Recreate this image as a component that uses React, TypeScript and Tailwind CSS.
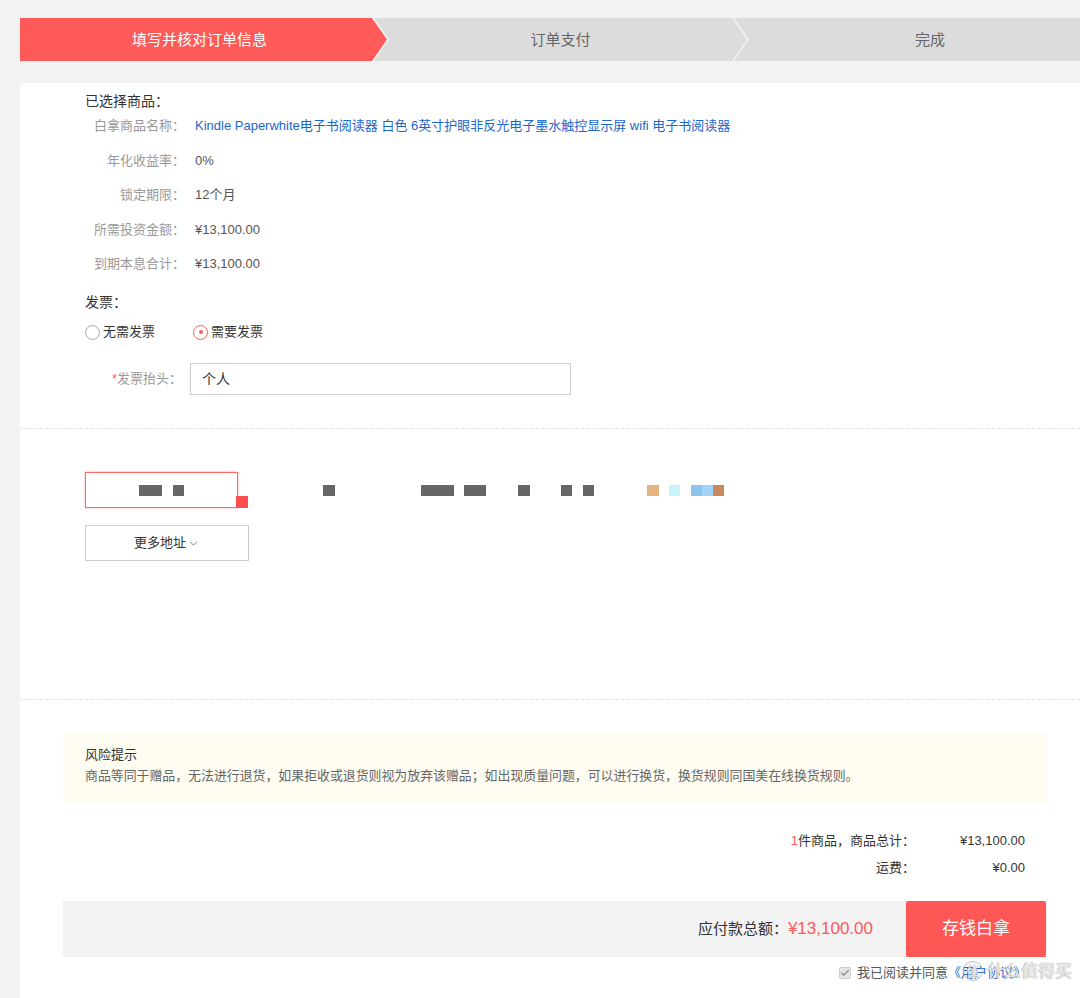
import { ChevronDown, Check } from "lucide-react";

const rows = [
  { label: "白拿商品名称：", value: "Kindle Paperwhite电子书阅读器 白色 6英寸护眼非反光电子墨水触控显示屏 wifi 电子书阅读器", link: true },
  { label: "年化收益率：", value: "0%" },
  { label: "锁定期限：", value: "12个月" },
  { label: "所需投资金额：", value: "¥13,100.00" },
  { label: "到期本息合计：", value: "¥13,100.00" },
];

// redacted address blocks: [marginLeft, width, colour]
const blocks: [number, number, string][] = [
  [85, 12, "#666666"],
  [86, 33, "#666666"],
  [10, 22, "#666666"],
  [32, 12, "#666666"],
  [31, 11, "#666666"],
  [11, 11, "#666666"],
  [53, 12, "#e2b47f"],
  [10, 11, "#c7f3fa"],
  [11, 11, "#8cc4ee"],
  [0, 11, "#a0d4f8"],
  [0, 11, "#c9895c"],
];

export default function App() {
  return (
    <div className="min-h-[998px] bg-[#f2f2f2] pl-[20px] pt-[18px] font-['Liberation_Sans','Noto_Sans_CJK_SC',sans-serif] text-[#333]">
      {/* Steps */}
      <div className="flex h-[43px] text-[15px]">
        <div className="flex w-[367px] shrink-0 items-center justify-center bg-[#ff5a5a] pt-[2px] pr-[8px] text-white [clip-path:polygon(0_0,calc(100%_-_15px)_0,100%_50%,calc(100%_-_15px)_100%,0_100%)]">
          填写并核对订单信息
        </div>
        <div className="-ml-[13px] flex w-[373px] shrink-0 items-center justify-center bg-[#dcdcdc] pt-[2px] text-[#666] [clip-path:polygon(0_0,calc(100%_-_15px)_0,100%_50%,calc(100%_-_15px)_100%,0_100%,15px_50%)]">
          订单支付
        </div>
        <div className="-ml-[13px] flex flex-1 items-center justify-center bg-[#dcdcdc] pt-[2px] pl-[46px] text-[#666] [clip-path:polygon(0_0,100%_0,100%_100%,0_100%,15px_50%)]">
          完成
        </div>
      </div>

      {/* Main panel */}
      <div className="relative mt-[22px] h-[915px] bg-white">
        <div className="pl-[65px] pt-[8px] pb-[33px]">
          <p className="text-[14px] leading-[20px] text-[#333]">已选择商品：</p>
          <div className="mt-[5px] flex flex-col gap-[14.5px] text-[13px] leading-[20px]">
            {rows.map((r) => (
              <div key={r.label} className="flex">
                <span className="w-[100px] shrink-0 text-right text-[#999]">{r.label}</span>
                <span className={`ml-[10px] ${r.link ? "text-[#1a66cc]" : "text-[#555]"}`}>{r.value}</span>
              </div>
            ))}
          </div>

          <p className="mt-[18px] text-[14px] leading-[20px]">发票：</p>
          <div className="mt-[10px] flex items-center text-[13px] leading-[20px]">
            <span className="h-[15px] w-[15px] rounded-full border border-[#aaa]" />
            <span className="ml-[3px]">无需发票</span>
            <span className="ml-[38px] flex h-[15px] w-[15px] items-center justify-center rounded-full border border-[#ff5a5a]">
              <span className="h-[4px] w-[4px] rounded-full bg-[#ff5a5a]" />
            </span>
            <span className="ml-[3px]">需要发票</span>
          </div>

          <div className="mt-[21px] flex items-center text-[13px]">
            <span className="w-[97px] text-right text-[#999]">
              <span className="text-[#ff5a5a]">*</span>发票抬头：
            </span>
            <div className="ml-[8px] flex h-[32px] w-[381px] items-center border border-[#ccc] pl-[11px] text-[14px] text-[#333]">
              个人
            </div>
          </div>
        </div>

        <div className="border-t border-dashed border-[#e3e3e3]" />

        {/* Address */}
        <div className="pl-[65px] pt-[43px] pb-[138px]">
          <div className="flex items-center">
            <div className="relative flex h-[36px] w-[153px] shrink-0 items-center border border-[#ff6b6b] pl-[53px] shadow-[0_0_2px_#ff9b9b]">
              <span className="h-[11px] w-[23px] bg-[#666]" />
              <span className="ml-[11px] h-[11px] w-[11px] bg-[#666]" />
              <span className="absolute -right-[11px] -bottom-[1px] h-[12px] w-[12px] bg-[#ff4d4d]" />
            </div>
            {blocks.map(([ml, w, c], i) => (
              <span
                key={i}
                className="h-[11px] shrink-0"
                style={{ marginLeft: ml, width: w, background: c }}
              />
            ))}
          </div>
          <button className="mt-[17px] flex h-[36px] w-[164px] items-center justify-center border border-[#ccc] text-[13px] text-[#333]">
            更多地址
            <ChevronDown className="ml-[1px] h-[13px] w-[13px] text-[#666]" strokeWidth={1.5} />
          </button>
        </div>

        <div className="border-t border-dashed border-[#e3e3e3]" />

        {/* Risk notice */}
        <div className="ml-[43px] mr-[33px] mt-[33px] h-[70px] bg-[#fffdf1] pl-[22px] pt-[12px]">
          <p className="text-[13px] leading-[20px] text-[#333]">风险提示</p>
          <p className="mt-[1px] text-[12.9px] leading-[20px] text-[#666]">
            商品等同于赠品，无法进行退货，如果拒收或退货则视为放弃该赠品；如出现质量问题，可以进行换货，换货规则同国美在线换货规则。
          </p>
        </div>

        {/* Summary */}
        <div className="mt-[28px] flex flex-col gap-[7px] pr-[55px] text-[13px] leading-[20px]">
          <div className="flex justify-end">
            <span className="text-right">
              <span className="text-[#ff5a5a]">1</span>件商品，商品总计：
            </span>
            <span className="w-[110px] text-right">¥13,100.00</span>
          </div>
          <div className="flex justify-end">
            <span className="text-right">运费：</span>
            <span className="w-[110px] text-right">¥0.00</span>
          </div>
        </div>

        {/* Total bar */}
        <div className="ml-[43px] mr-[33px] mt-[23px] flex h-[56px] items-center justify-end bg-[#f2f2f2]">
          <span className="text-[15px] text-[#333]">应付款总额：</span>
          <span className="text-[17px] text-[#ff5a5a]">¥13,100.00</span>
          <button className="ml-[33px] mr-[1px] h-full w-[140px] rounded-[2px] bg-[#ff5656] text-[17px] text-white">
            存钱白拿
          </button>
        </div>

        {/* Agreement */}
        <div className="mt-[6px] flex items-center justify-end pr-[54px] text-[13px] leading-[20px]">
          <span className="flex h-[12px] w-[12px] items-center justify-center rounded-[2px] border border-[#ccc] bg-[#e6e6e6]">
            <Check className="h-[10px] w-[10px] text-[#888]" strokeWidth={3} />
          </span>
          <span className="ml-[6px] text-[#555]">我已阅读并同意</span>
          <span className="text-[#1a66cc]">《用户协议》</span>
        </div>

        {/* Watermark */}
        <div className="pointer-events-none absolute right-[8px] bottom-[14px] flex items-center text-[17px] text-white/80 [text-shadow:0_0_1px_#999,0_0_1px_#999]">
          <span className="flex h-[20px] w-[20px] items-center justify-center rounded-full border border-[#bbb] text-[13px]">值</span>
          <span className="ml-[4px]">什么值得买</span>
        </div>
      </div>
    </div>
  );
}
